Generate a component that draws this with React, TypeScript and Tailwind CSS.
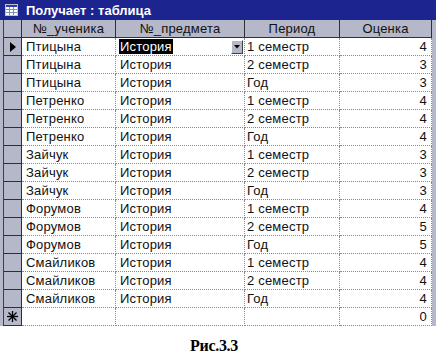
import React from "react";

const rows: [string, string, string, string][] = [
  ["Птицына", "История", "1 семестр", "4"],
  ["Птицына", "История", "2 семестр", "3"],
  ["Птицына", "История", "Год", "3"],
  ["Петренко", "История", "1 семестр", "4"],
  ["Петренко", "История", "2 семестр", "4"],
  ["Петренко", "История", "Год", "4"],
  ["Зайчук", "История", "1 семестр", "3"],
  ["Зайчук", "История", "2 семестр", "3"],
  ["Зайчук", "История", "Год", "3"],
  ["Форумов", "История", "1 семестр", "4"],
  ["Форумов", "История", "2 семестр", "5"],
  ["Форумов", "История", "Год", "5"],
  ["Смайликов", "История", "1 семестр", "4"],
  ["Смайликов", "История", "2 семестр", "4"],
  ["Смайликов", "История", "Год", "4"],
];

const cell =
  "h-[18px] border-r border-b border-dotted border-[#8a8a8a] flex items-center overflow-hidden whitespace-nowrap";

export default function App() {
  return (
    <div
      className="w-[436px] h-[364px] bg-white flex flex-col"
      style={{ fontFamily: '"Liberation Sans", Arial, sans-serif' }}
    >
      {/* window */}
      <div className="w-[436px] flex flex-col">
        {/* title bar */}
        <div className="h-[20px] bg-[#1c2490] flex items-center pl-[5px] gap-[8px]">
          <svg width="13" height="12" viewBox="0 0 13 12">
            <rect x="0.5" y="0.5" width="12" height="11" fill="#ffffff" stroke="#c0c0c0" />
            <rect x="1" y="1" width="11" height="2" fill="#2040c0" />
            <line x1="1" y1="5.5" x2="12" y2="5.5" stroke="#8090b0" />
            <line x1="1" y1="8.5" x2="12" y2="8.5" stroke="#8090b0" />
            <line x1="4.5" y1="3" x2="4.5" y2="11" stroke="#8090b0" />
            <line x1="8.5" y1="3" x2="8.5" y2="11" stroke="#8090b0" />
          </svg>
          <span className="text-white font-bold text-[13px] leading-none">Получает : таблица</span>
        </div>
        {/* body */}
        <div className="flex bg-[#b4b8c8]">
          <div className="w-[3px] bg-[#b4b8c8]" />
          <div className="w-[1px] bg-[#404040]" />
          <div className="flex flex-col text-[13px] text-[#111] tracking-[0.2px]">
            {/* header */}
            <div className="flex">
              <div className="w-[18px] h-[18px] bg-[#b4b8c8] border-r border-b border-[#303030]" />
              <div className="w-[94px] h-[18px] bg-[#b4b8c8] border-r border-b border-[#303030] flex items-center justify-center">№_ученика</div>
              <div className="w-[129px] h-[18px] bg-[#b4b8c8] border-r border-b border-[#303030] flex items-center justify-center">№_предмета</div>
              <div className="w-[95px] h-[18px] bg-[#b4b8c8] border-r border-b border-[#303030] flex items-center justify-center">Период</div>
              <div className="w-[92px] h-[18px] bg-[#b4b8c8] border-r border-b border-[#303030] flex items-center justify-center">Оценка</div>
            </div>
            {rows.map((r, i) => (
              <div key={i} className="flex">
                <div className="w-[18px] h-[18px] bg-[#b4b8c8] border-r border-b border-[#303030] flex items-center justify-center">
                  {i === 0 && (
                    <svg width="6" height="10" viewBox="0 0 6 10">
                      <polygon points="0,0 6,5 0,10" fill="#000" />
                    </svg>
                  )}
                </div>
                <div className={`w-[94px] bg-white pl-[4px] ${cell}`}>{r[0]}</div>
                <div className={`w-[129px] bg-white pl-[3px] pr-[1px] justify-between ${cell}`}>
                  {i === 0 ? (
                    <>
                      <span className="bg-black text-white px-[1px] leading-[15px]">{r[1]}</span>
                      <span className="w-[12px] h-[14px] bg-[#b4b8c8] border border-t-white border-l-white border-r-[#404040] border-b-[#404040] flex items-center justify-center">
                        <svg width="6" height="4" viewBox="0 0 6 4">
                          <polygon points="0,0 6,0 3,3.5" fill="#000" />
                        </svg>
                      </span>
                    </>
                  ) : (
                    <span className="pl-[1px]">{r[1]}</span>
                  )}
                </div>
                <div className={`w-[95px] bg-white pl-[2px] ${cell}`}>{r[2]}</div>
                <div className={`w-[92px] bg-white justify-end pr-[4px] ${cell}`}>{r[3]}</div>
              </div>
            ))}
            {/* new row */}
            <div className="flex">
              <div className="w-[18px] h-[18px] bg-[#b4b8c8] border-r border-b border-[#303030] flex items-center justify-center">
                <svg width="11" height="11" viewBox="0 0 11 11">
                  <g stroke="#000" strokeWidth="1.3">
                    <line x1="5.5" y1="0" x2="5.5" y2="11" />
                    <line x1="0" y1="5.5" x2="11" y2="5.5" />
                    <line x1="1.5" y1="1.5" x2="9.5" y2="9.5" />
                    <line x1="9.5" y1="1.5" x2="1.5" y2="9.5" />
                  </g>
                </svg>
              </div>
              <div className={`w-[94px] bg-white ${cell}`} />
              <div className={`w-[129px] bg-white ${cell}`} />
              <div className={`w-[95px] bg-white ${cell}`} />
              <div className={`w-[92px] bg-white justify-end pr-[4px] ${cell}`}>0</div>
            </div>
          </div>
          <div className="w-[4px] bg-[#b4b8c8]" />
        </div>
      </div>
      {/* caption */}
      <div className="flex justify-center pt-[8px] pr-[8px]">
        <span
          className="font-bold text-[16px] text-black"
          style={{ fontFamily: '"Liberation Serif", "Times New Roman", serif', letterSpacing: "-0.3px" }}
        >
          Рис.3.3
        </span>
      </div>
    </div>
  );
}
